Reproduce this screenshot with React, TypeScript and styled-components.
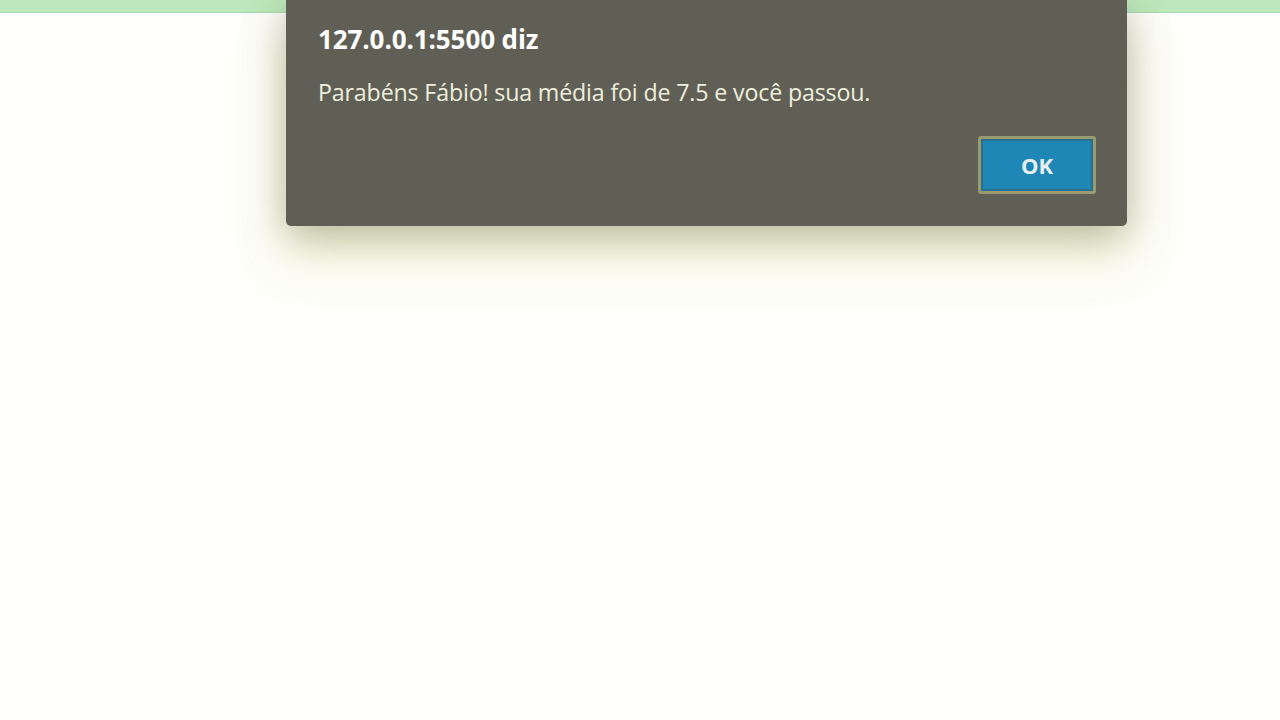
import React from "react";
import styled, { createGlobalStyle } from "styled-components";

const Global = createGlobalStyle`
  html, body { margin: 0; padding: 0; }
  body { background: #fefefa; font-family: "Noto Sans", "Open Sans", sans-serif; }
`;

const Page = styled.div`
  width: 1280px;
  height: 720px;
  position: relative;
  overflow: hidden;
  background: #fefefa;
`;

const TopStrip = styled.div`
  height: 12px;
  background: #bde8bd;
  border-bottom: 1px solid #a8d8b8;
`;

const Dialog = styled.div`
  position: absolute;
  left: 286px;
  top: 0;
  width: 841px;
  height: 226px;
  box-sizing: border-box;
  background: #5f5f56;
  border-radius: 0 0 5px 5px;
  box-shadow: 0 10px 40px rgba(60, 60, 40, 0.35), 0 30px 50px rgba(220, 220, 100, 0.25);
  padding: 21px 31px 0 32px;
  display: flex;
  flex-direction: column;
`;

const Title = styled.div`
  font-family: "Open Sans", "Noto Sans", sans-serif;
  font-weight: 700;
  font-size: 26px;
  line-height: 36px;
  letter-spacing: -0.1px;
  color: #ffffff;
`;

const Message = styled.div`
  margin-top: 19px;
  font-family: "Open Sans", "Noto Sans", sans-serif;
  font-size: 23.2px;
  line-height: 32px;
  letter-spacing: -0.15px;
  color: #eeeedd;
`;

const Actions = styled.div`
  display: flex;
  justify-content: flex-end;
  margin-top: 28px;
`;

const OkButton = styled.button`
  width: 118px;
  height: 58px;
  box-sizing: border-box;
  border: 3px solid #9a9a70;
  border-radius: 3px;
  background: #1f87b5;
  box-shadow: inset 0 0 0 2px #2a6f8c;
  color: #e8f0f0;
  font-family: "Open Sans", "Noto Sans", sans-serif;
  font-weight: 700;
  font-size: 22px;
  cursor: pointer;
`;

export default function App() {
  return (
    <Page>
      <Global />
      <TopStrip />
      <Dialog>
        <Title>127.0.0.1:5500 diz</Title>
        <Message>Parabéns Fábio! sua média foi de 7.5 e você passou.</Message>
        <Actions>
          <OkButton>OK</OkButton>
        </Actions>
      </Dialog>
    </Page>
  );
}
